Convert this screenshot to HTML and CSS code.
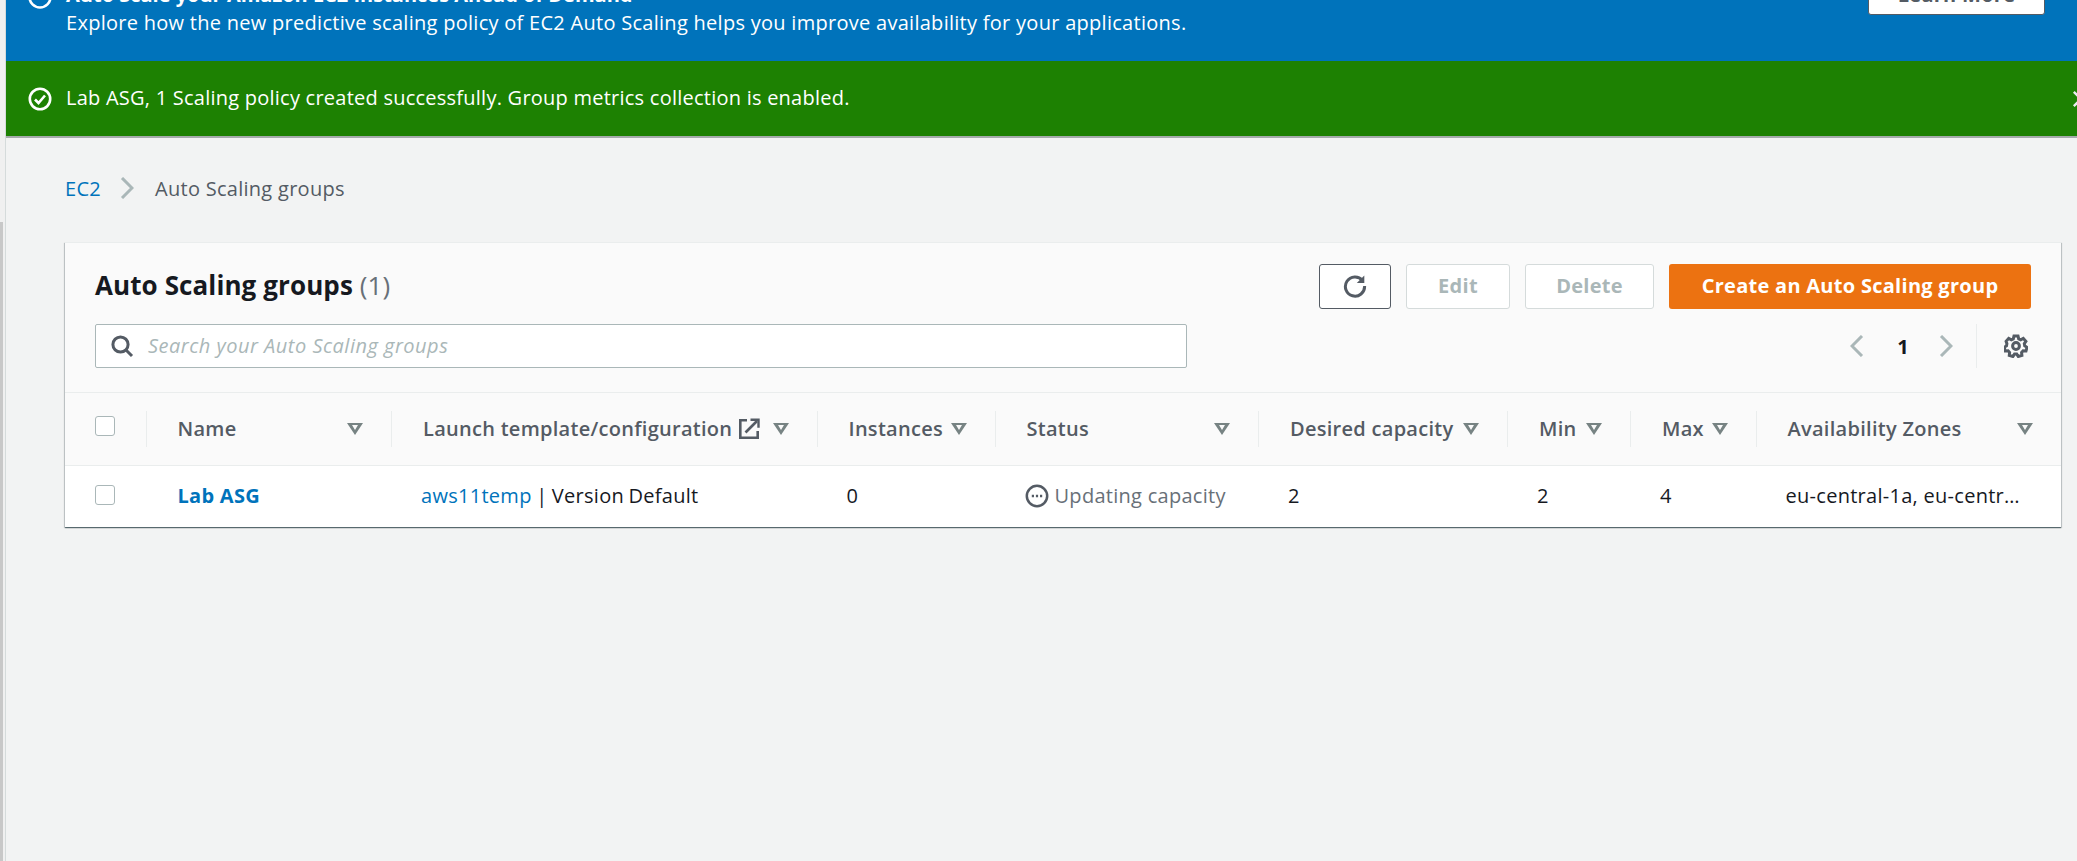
FILE: index.html
```html
<!DOCTYPE html>
<html lang="en">
<head>
    <meta charset="UTF-8">
    <meta name="viewport" content="width=device-width, initial-scale=1.0">
    <title>Auto Scaling groups</title>
    <link rel="stylesheet" href="styles.css">
</head>
<body>

    <div class="strip"><div class="strip-thumb"></div></div>

    <div class="main">

        <div class="flash flash-info">
            <svg class="flash-icon flash-icon-top" viewBox="0 0 24 24" fill="none" stroke="#fff" stroke-width="2.6"><circle cx="12" cy="12" r="10.5"/></svg>
            <div class="flash-text">
                <div class="flash-title">Auto Scale your Amazon EC2 Instances Ahead of Demand</div>
                <div>Explore how the new predictive scaling policy of EC2 Auto Scaling helps you improve availability for your applications.</div>
            </div>
            <div class="learn-more">Learn More</div>
        </div>

        <div class="flash flash-success">
            <svg class="flash-icon" viewBox="0 0 24 24" fill="none" stroke="#fff" stroke-width="2.6"><circle cx="12" cy="12" r="10.2"/><path d="M7 12.5l3.5 3.5L17 8.5"/></svg>
            <div class="flash-text flash-message">Lab ASG, 1 Scaling policy created successfully. Group metrics collection is enabled.</div>
            <svg class="flash-close" viewBox="0 0 20 20" fill="none" stroke="#e9ebed" stroke-width="2.6"><path d="M2 2l16 16M18 2L2 18"/></svg>
        </div>

        <div class="content">
            <div class="breadcrumb">
                <a href="#">EC2</a>
                <svg class="crumb-sep" viewBox="0 0 14 22" fill="none" stroke="#aab7b8" stroke-width="3"><path d="M2 1l10 10L2 21"/></svg>
                <span>Auto Scaling groups</span>
            </div>

            <div class="card">
                <div class="card-head">
                    <div class="head-row">
                        <h1>Auto Scaling groups <span class="count">(1)</span></h1>
                        <div class="actions">
                            <button class="btn btn-refresh">
                                <svg viewBox="0 0 24 24" width="24" height="24" fill="none" stroke="#545b64" stroke-width="3"><path d="M19.5 6.5A9.6 9.6 0 1 0 21.6 12"/><path d="M21.3 1.5v7.5h-7.5z" fill="#545b64" stroke="none"/></svg>
                            </button>
                            <button class="btn btn-edit">Edit</button>
                            <button class="btn btn-delete">Delete</button>
                            <button class="btn btn-primary">Create an Auto Scaling group</button>
                        </div>
                    </div>
                    <div class="head-row">
                        <div class="search">
                            <svg viewBox="0 0 24 24" width="24" height="24" fill="none" stroke="#545b64" stroke-width="3"><circle cx="10.5" cy="10.5" r="7.6"/><path d="M16 16l6 6"/></svg>
                            <span>Search your Auto Scaling groups</span>
                        </div>
                        <div class="pager">
                            <svg class="pager-arrow" viewBox="0 0 14 22" fill="none" stroke="#aab7b8" stroke-width="3"><path d="M12 1L2 11l10 10"/></svg>
                            <span class="page-num">1</span>
                            <svg class="pager-arrow" viewBox="0 0 14 22" fill="none" stroke="#aab7b8" stroke-width="3"><path d="M2 1l10 10L2 21"/></svg>
                            <div class="pager-sep"></div>
                            <svg class="gear" viewBox="0 0 24 24" fill="none" stroke="#545b64" stroke-width="3"><path d="M10 2h4l.7 2.9 2 .9 2.6-1.5 2.6 3-1.6 2.4.4 2.2 2.3 1.4-1 3.6-2.9-.1-1.5 1.7.3 2.9-3.6 1.100-1.600-2.400h-2.200l-1.600 2.400-3.600-1.100.3-2.900-1.500-1.700-2.900.1-1-3.600 2.300-1.400.4-2.200L2.100 7.300l2.600-3 2.600 1.500 2-.9z"/><circle cx="12" cy="12" r="3.400"/></svg>
                        </div>
                    </div>
                </div>

                <div class="table-row table-header">
                    <div class="cell cell-check"><span class="checkbox"></span></div>
                    <div class="cell"><b>Name</b><span class="sort"></span></div>
                    <div class="cell"><b>Launch template/configuration</b>
                        <svg class="external" viewBox="0 0 22 22" fill="none" stroke="#545b64" stroke-width="2.600"><path d="M9 2.300H2.300v17.400h17.400V13"/><path d="M7.500 14.500L19 3"/><path d="M12.500 1.800h8v8" stroke-width="2.400"/></svg>
                        <span class="sort"></span></div>
                    <div class="cell"><b>Instances</b><span class="sort"></span></div>
                    <div class="cell"><b>Status</b><span class="sort"></span></div>
                    <div class="cell"><b>Desired capacity</b><span class="sort"></span></div>
                    <div class="cell"><b>Min</b><span class="sort"></span></div>
                    <div class="cell"><b>Max</b><span class="sort"></span></div>
                    <div class="cell"><b>Availability Zones</b><span class="sort"></span></div>
                </div>

                <div class="table-row table-body">
                    <div class="cell cell-check"><span class="checkbox"></span></div>
                    <div class="cell cell-name"><a href="#">Lab ASG</a></div>
                    <div class="cell"><span class="template"><a href="#">aws11temp</a> | Version Default</span></div>
                    <div class="cell">0</div>
                    <div class="cell status">
                        <svg viewBox="0 0 24 24" width="24" height="24" fill="none" stroke="#545b64" stroke-width="2.500"><circle cx="12" cy="12" r="10.200"/><path d="M6.800 12h2.200M10.900 12h2.200M15 12h2.200"/></svg>
                        <span>Updating capacity</span>
                    </div>
                    <div class="cell">2</div>
                    <div class="cell">2</div>
                    <div class="cell">4</div>
                    <div class="cell"><span class="clip">eu-central-1a, eu-central-1b</span></div>
                </div>
            </div>
        </div>
    </div>

</body>
</html>
```

FILE: styles.css
```css
html, body {
    height: 100%;
    margin: 0;
    overflow: hidden;
}

body {
    display: flex;
    font-family: "Open Sans", "Liberation Sans", sans-serif;
    font-size: 20px;
    letter-spacing: .28px;
    color: #16191f;
    background: #f2f3f3;
}

a {
    color: #0073bb;
    text-decoration: none;
}

b {
    font-weight: 600;
}

.strip {
    flex: 0 0 5px;
    background: #f0f0f0;
    padding-top: 222px;
    box-sizing: border-box;
}

.strip-thumb {
    width: 3px;
    height: 100%;
    background: #c8c8c8;
}

.main {
    flex: 1;
    min-width: 0;
    overflow: hidden;
    border-left: 1px solid #d5dbdb;
}

/* banners */
.flash {
    display: flex;
    align-items: center;
    color: #fff;
    margin-left: -1px;
}

.flash-info {
    height: 61px;
    background: #0073bb;
    align-items: flex-start;
}

.flash-success {
    height: 75px;
    background: #1d8102;
    box-shadow: 0 2px 0 #a5abab;
    position: relative;
}

.flash-icon {
    flex: 0 0 24px;
    width: 24px;
    height: 24px;
    margin-left: 23px;
    margin-right: 14px;
}

.flash-icon-top {
    margin-top: -15px;
}

.flash-text {
    flex: 1;
    line-height: 26px;
}

.flash-info .flash-text {
    margin-top: -18px;
}

.flash-message {
    margin-top: -1px;
    letter-spacing: .24px;
}

.flash-title {
    margin-bottom: 2px;
    font-weight: 700;
    letter-spacing: 0;
}

.learn-more {
    width: 177px;
    height: 45px;
    margin-top: -30px;
    margin-right: 32px;
    background: #fff;
    border: 1px solid #545b64;
    border-radius: 3px;
    box-sizing: border-box;
    color: #545b64;
    font-weight: 700;
    text-align: center;
    line-height: 47px;
}

.flash-close {
    flex: 0 0 18px;
    width: 18px;
    height: 18px;
    margin-right: -13px;
}

/* breadcrumb */
.content {
    padding-left: 59px;
    padding-right: 16px;
}

.breadcrumb {
    display: flex;
    align-items: center;
    height: 26px;
    margin-top: 39px;
    margin-bottom: 41px;
    color: #545b64;
}

.crumb-sep {
    width: 14px;
    height: 22px;
    margin-left: 19px;
    margin-right: 21px;
}

/* card */
.card {
    background: #fff;
    border-top: 1px solid #eaeded;
    box-shadow: 0 1px 1px 0 rgba(0, 28, 36, .5), 1px 1px 1px 0 rgba(0, 28, 36, .15), -1px 1px 1px 0 rgba(0, 28, 36, .15);
}

.card-head {
    background: #fafafa;
    padding: 21px 30px 24px 30px;
    border-bottom: 1px solid #eaeded;
}

.head-row {
    display: flex;
    justify-content: space-between;
    align-items: center;
}

.head-row + .head-row {
    margin-top: 15px;
}

h1 {
    margin: -3px 0 0;
    font-size: 26px;
    font-weight: 700;
    letter-spacing: .1px;
}

.count {
    font-weight: 400;
    color: #687078;
}

.actions {
    display: flex;
    gap: 15px;
}

.btn {
    height: 45px;
    box-sizing: border-box;
    padding: 0 0 2px;
    border-radius: 3px;
    font: 700 20px "Open Sans", "Liberation Sans", sans-serif;
    letter-spacing: .28px;
    background: #fff;
}

.btn-refresh {
    width: 72px;
    border: 1px solid #545b64;
    display: flex;
    align-items: center;
    justify-content: center;
}

.btn-edit {
    width: 104px;
    border: 1px solid #d5dbdb;
    color: #aab7b8;
}

.btn-delete {
    width: 129px;
    border: 1px solid #d5dbdb;
    color: #aab7b8;
}

.btn-primary {
    width: 362px;
    border: none;
    background: #ec7211;
    color: #fff;
}

.search {
    display: flex;
    align-items: center;
    width: 1092px;
    height: 44px;
    box-sizing: border-box;
    padding-left: 14px;
    gap: 14px;
    background: #fff;
    border: 1px solid #aab7b8;
    border-radius: 2px;
    font-style: italic;
    letter-spacing: .5px;
    color: #aab7b8;
}

.search span {
    margin-top: -2px;
}

.pager {
    display: flex;
    align-items: center;
    height: 44px;
    margin-right: 3px;
}

.pager-arrow {
    width: 14px;
    height: 22px;
}

.page-num {
    width: 75px;
    text-align: center;
    text-indent: 3px;
    font-weight: 700;
}

.pager-sep {
    width: 1px;
    height: 44px;
    margin-left: 23px;
    margin-right: 27px;
    background: #eaeded;
}

.gear {
    width: 24px;
    height: 24px;
}

/* table */
.table-row {
    display: grid;
    grid-template-columns: 80.500px 245.500px 425.500px 178px 263.500px 249px 123px 125.500px 1fr;
}

.table-header {
    height: 72px;
    background: #fafafa;
    border-bottom: 1px solid #eaeded;
    align-items: center;
    color: #545b64;
}

.table-body {
    height: 61px;
    align-items: center;
}

.cell {
    display: flex;
    align-items: center;
    min-width: 0;
    box-sizing: border-box;
    padding-left: 30px;
    white-space: nowrap;
}

.table-header .cell {
    height: 36px;
    padding-left: 31px;
    padding-right: 28px;
    border-left: 1px solid #eaeded;
}

.table-header b {
    margin-top: -2px;
}

.table-header .cell-check {
    border-left: none;
}

.table-header .cell-check,
.table-body .cell-check {
    padding-left: 30px;
    padding-right: 0;
}

.table-body .cell {
    line-height: 24px;
    padding-bottom: 2px;
}

.table-body .cell-check {
    padding-bottom: 0;
}

.table-body .cell-name {
    padding-left: 32px;
}

.cell-name a {
    font-weight: 700;
}

.template {
    word-spacing: -1px;
}

.checkbox {
    display: block;
    width: 20px;
    height: 20px;
    box-sizing: border-box;
    background: #fff;
    border: 1px solid #aab7b8;
    border-radius: 3px;
}

.table-header .checkbox {
    margin-top: -6px;
}

.table-body .checkbox {
    margin-top: -3px;
}

.sort {
    flex: 0 0 16px;
    width: 0;
    height: 0;
    margin-left: auto;
    box-sizing: border-box;
    border-style: solid;
    border-width: 12px 8px 0;
    border-color: #778383 transparent transparent;
    position: relative;
}

.sort::after {
    content: "";
    position: absolute;
    left: -3px;
    top: -10px;
    border-style: solid;
    border-width: 5px 3px 0;
    border-color: #fafafa transparent transparent;
}

.external {
    flex: 0 0 22px;
    width: 22px;
    height: 22px;
    margin-left: 6px;
}

.status {
    gap: 6px;
    color: #687078;
}

.status svg {
    margin-top: 1px;
}

.clip {
    display: block;
    width: 243px;
    overflow: hidden;
    text-overflow: ellipsis;
}
```
